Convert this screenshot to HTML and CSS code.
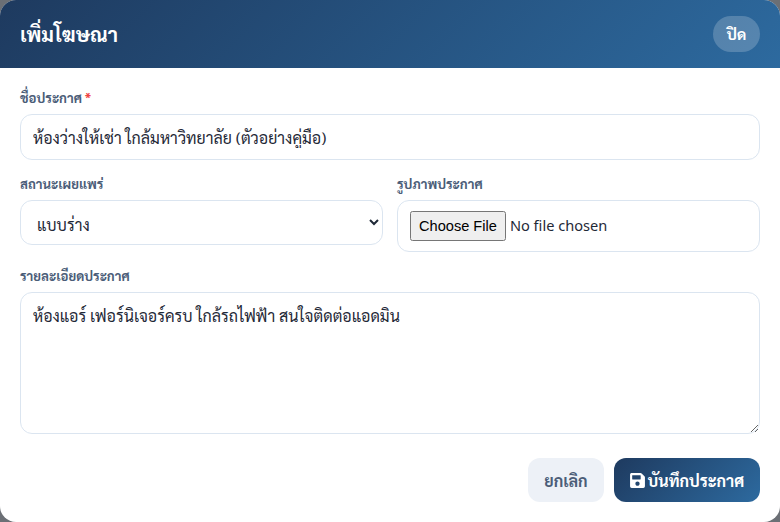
FILE: index.html
```html
<!DOCTYPE html>
<html lang="th">

<head>
    <meta charset="UTF-8">
    <title>เพิ่มโฆษณา</title>
    <link rel="stylesheet" href="styles.css">
</head>

<body>
    <div class="modal">
        <div class="modal-header">
            <h1>เพิ่มโฆษณา</h1>
            <button class="btn-close" type="button">ปิด</button>
        </div>
        <form class="modal-body">
            <div class="field">
                <label for="title">ชื่อประกาศ <span class="required">*</span></label>
                <input id="title" class="control" type="text" value="ห้องว่างให้เช่า ใกล้มหาวิทยาลัย (ตัวอย่างคู่มือ)">
            </div>
            <div class="field-row">
                <div class="field">
                    <label for="status">สถานะเผยแพร่</label>
                    <select id="status" class="control">
                        <option>แบบร่าง</option>
                        <option>เผยแพร่</option>
                    </select>
                </div>
                <div class="field">
                    <label for="image">รูปภาพประกาศ</label>
                    <input id="image" class="control" type="file">
                </div>
            </div>
            <div class="field">
                <label for="detail">รายละเอียดประกาศ</label>
                <textarea id="detail" class="control">ห้องแอร์ เฟอร์นิเจอร์ครบ ใกล้รถไฟฟ้า สนใจติดต่อแอดมิน</textarea>
            </div>
            <div class="actions">
                <button class="btn btn-cancel" type="button">ยกเลิก</button>
                <button class="btn btn-save" type="button">
                    <svg class="icon" viewBox="0 0 448 512" width="15" height="17">
                        <path fill="currentColor" d="M433.9 129.9l-83.9-83.9A48 48 0 0 0 316.1 32H48C21.5 32 0 53.5 0 80v352c0 26.5 21.5 48 48 48h352c26.5 0 48-21.5 48-48V163.9a48 48 0 0 0-14.1-34zM224 416c-35.3 0-64-28.7-64-64s28.7-64 64-64 64 28.7 64 64-28.7 64-64 64zm96-304.5V212c0 6.6-5.4 12-12 12H76c-6.6 0-12-5.4-12-12V108c0-6.6 5.4-12 12-12h228.5c3.2 0 6.2 1.3 8.5 3.5l3.5 3.5c2.2 2.3 3.5 5.3 3.5 8.5z"/>
                    </svg>
                    บันทึกประกาศ
                </button>
            </div>
        </form>
    </div>
</body>

</html>
```

FILE: styles.css
```css
* {
    box-sizing: border-box;
}

html,
body {
    height: 100%;
}

body {
    font-family: "Sarabun", "Noto Sans", sans-serif;
    background: #6b6f75;
    color: #1f2937;
    margin: 0;
    overflow: hidden;
}

.modal {
    height: 522px;
    background: #fff;
    border-radius: 16px;
    overflow: hidden;
}

.modal-header {
    display: flex;
    align-items: center;
    justify-content: space-between;
    height: 68px;
    padding: 0 20px;
    color: #fff;
    background: linear-gradient(135deg, #1e3a5f, #2d6a9f);
}

.modal-header h1 {
    margin: 0;
    font-size: 20px;
    font-weight: 700;
}

.btn-close {
    width: 47px;
    height: 36px;
    padding: 0;
    border: 0;
    border-radius: 18px;
    color: #fff;
    background: rgba(255, 255, 255, 0.2);
    font: inherit;
    font-size: 15.2px;
    font-weight: 700;
}

.modal-body {
    display: flex;
    flex-direction: column;
    gap: 14px;
    padding: 20px;
}

.field {
    display: flex;
    flex-direction: column;
    gap: 7px;
    min-width: 0;
}

.field-row {
    display: grid;
    grid-template-columns: 1fr 1fr;
    gap: 14px;
    align-items: start;
}

label {
    font-size: 13.2px;
    font-weight: 700;
    line-height: 19px;
    color: #4b5d78;
}

.required {
    color: #ef4444;
}

.control {
    width: 100%;
    padding: 12px;
    border: 1px solid #dbe5f0;
    border-radius: 12px;
    background: #fff;
    color: #1f2937;
    font-family: inherit;
    font-size: 16px;
}

input.control[type="text"] {
    height: 46px;
}

select.control {
    height: 45px;
}

input.control[type="file"] {
    height: 52px;
    padding: 10px 12px;
    font-family: "Noto Sans", sans-serif;
    font-size: 14.6px;
}

input.control[type="file"]::file-selector-button {
    height: 30px;
    padding: 1px 7px;
}

textarea.control {
    display: block;
    height: 142px;
}

.actions {
    display: flex;
    justify-content: flex-end;
    gap: 10px;
    margin-top: 10px;
}

.btn {
    display: flex;
    align-items: center;
    justify-content: center;
    gap: 3px;
    height: 44px;
    border: 0;
    border-radius: 12px;
    font-family: inherit;
    font-size: 16px;
    font-weight: 700;
}

.btn-cancel {
    width: 76px;
    color: #4b5d78;
    background: #edf1f7;
}

.btn-save {
    width: 146px;
    color: #fff;
    background: linear-gradient(135deg, #1e3a5f, #2d6a9f);
}
```
